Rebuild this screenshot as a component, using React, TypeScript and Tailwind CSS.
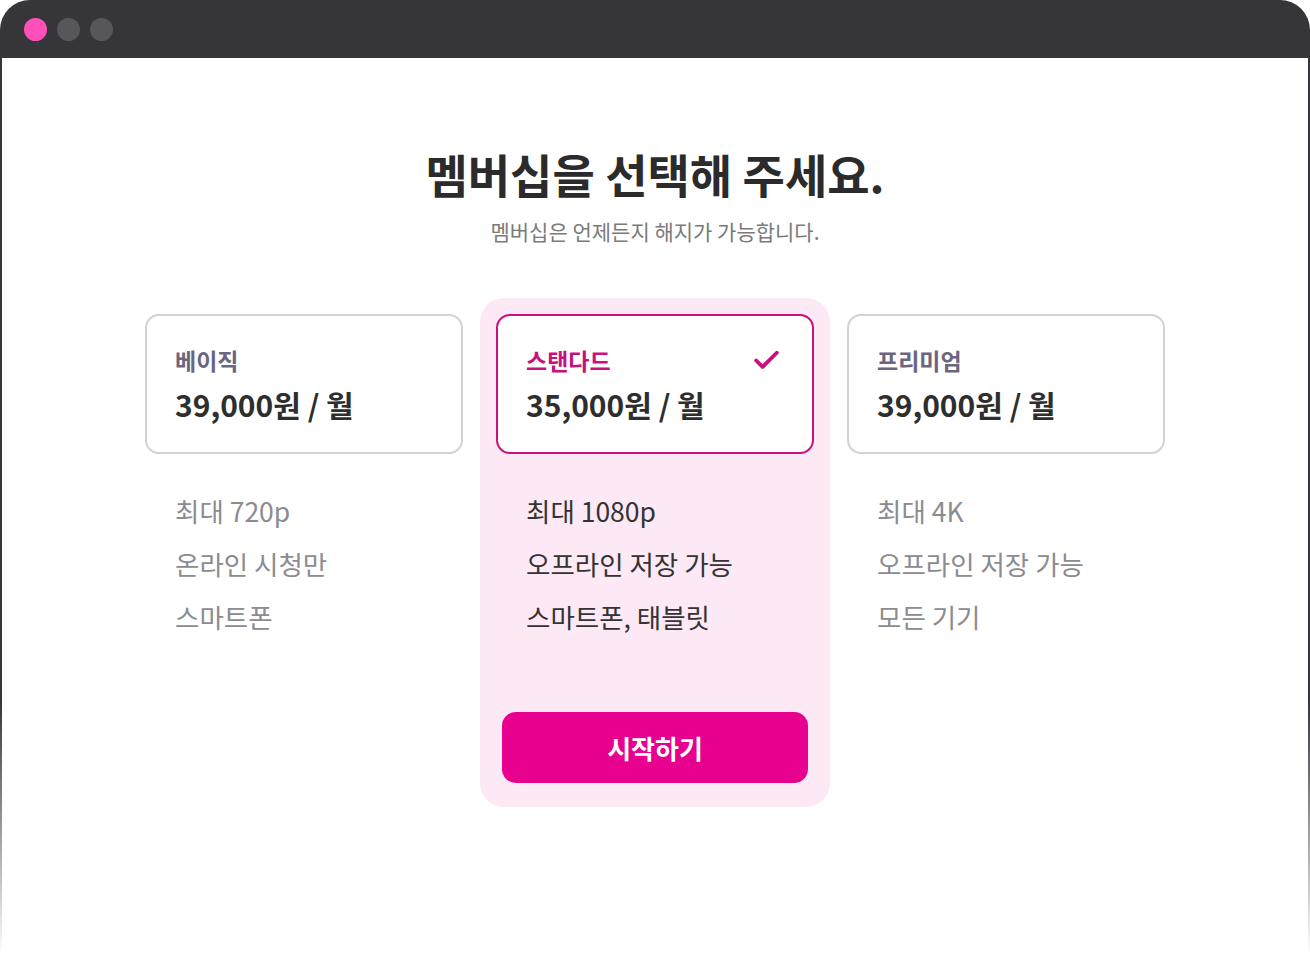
import React from 'react';
import { Check } from 'lucide-react';

interface Plan {
  id: string;
  name: string;
  price: string;
  features: string[];
}

const plans: Plan[] = [
  { id: 'basic', name: '베이직', price: '39,000원 / 월', features: ['최대 720p', '온라인 시청만', '스마트폰'] },
  { id: 'standard', name: '스탠다드', price: '35,000원 / 월', features: ['최대 1080p', '오프라인 저장 가능', '스마트폰, 태블릿'] },
  { id: 'premium', name: '프리미엄', price: '39,000원 / 월', features: ['최대 4K', '오프라인 저장 가능', '모든 기기'] },
];

const selectedId = 'standard';

const App: React.FC = () => {
  return (
    <div
      className="w-[1310px] h-[960px] overflow-hidden bg-[linear-gradient(to_bottom,#36353a_700px,#ffffff_955px)] rounded-t-[30px] flex flex-col"
      style={{ fontFamily: '"Noto Sans CJK KR", "Noto Sans", sans-serif' }}
    >
      {/* window title bar */}
      <div className="h-[58px] shrink-0 flex items-center gap-[10px] pl-[24px]">
        <span className="w-[23px] h-[23px] rounded-full bg-[#ff4fb8]" />
        <span className="w-[23px] h-[23px] rounded-full bg-[#57565b]" />
        <span className="w-[23px] h-[23px] rounded-full bg-[#57565b]" />
      </div>

      <div className="flex-1 mx-[2px] bg-white flex flex-col items-center">
        <h1 className="mt-[86px] text-[46px] leading-[58px] font-bold text-[#2b2b2b]">
          멤버십을 선택해 주세요.
        </h1>
        <p className="mt-[15px] text-[21px] leading-[28px] text-[#7a7a7a]">멤버십은 언제든지 해지가 가능합니다.</p>

        <div className="mt-[53px] grid grid-cols-[350px_350px_350px] gap-px">
          {plans.map((plan) => {
            const selected = plan.id === selectedId;
            return (
              <div
                key={plan.id}
                className={`flex flex-col p-4 rounded-[24px] ${selected ? 'bg-[#fde8f5]' : ''}`}
              >
                <div
                  className={`h-[140px] rounded-[14px] border-2 bg-white pl-[28px] pr-[30px] pt-[28px] ${
                    selected ? 'border-[#c8107f]' : 'border-[#d2d2d4]'
                  }`}
                >
                  <div className="flex items-center justify-between">
                    <span
                      className={`text-[23px] leading-[32px] font-bold ${
                        selected ? 'text-[#c8107f]' : 'text-[#6b6580]'
                      }`}
                    >
                      {plan.name}
                    </span>
                    {selected && <Check className="w-[31px] h-[31px] text-[#c8107f]" strokeWidth={3} />}
                  </div>
                  <div className="mt-[8px] text-[30px] leading-[40px] font-bold text-[#2e2e2e]">{plan.price}</div>
                </div>

                <ul className="mt-[38px] pl-[30px] flex flex-col gap-[16px]">
                  {plan.features.map((feature) => (
                    <li
                      key={feature}
                      className={`text-[26.5px] leading-[37px] ${selected ? 'text-[#333333]' : 'text-[#8b8b90]'}`}
                    >
                      {feature}
                    </li>
                  ))}
                </ul>

                {selected && (
                  <button className="mt-[77px] mx-[6px] mb-[8px] h-[71px] rounded-[14px] bg-[#e8008f] text-white text-[26px] font-bold">
                    시작하기
                  </button>
                )}
              </div>
            );
          })}
        </div>
      </div>
    </div>
  );
};

export default App;
